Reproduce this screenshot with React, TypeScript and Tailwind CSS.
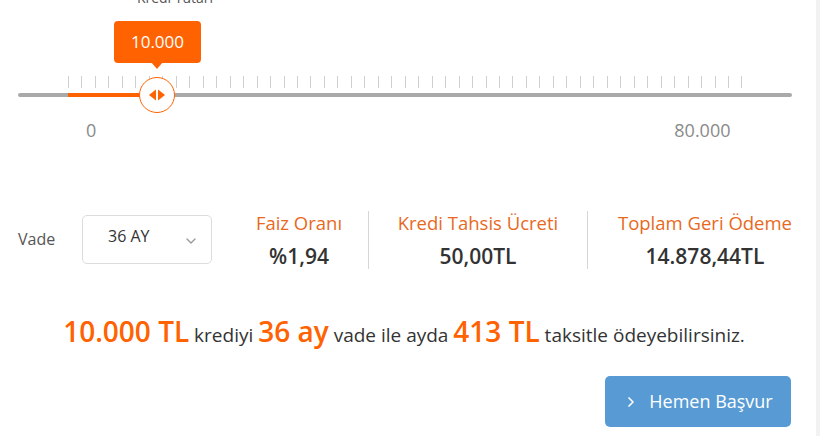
import { ChevronDown, ChevronRight } from 'lucide-react';

const font = { fontFamily: '"Open Sans", "Liberation Sans", sans-serif' };

const ticks = Array.from({ length: 51 }, (_, i) => i);

const Slider = () => (
  <div className="relative h-[190px]">
    {/* label above the value bubble, scrolled partly out of view */}
    <div className="absolute left-[100px] top-[-13px] w-[114px] text-center text-[14px] text-[#555]">
      Kredi Tutarı
    </div>

    {/* value bubble */}
    <div className="absolute left-[96px] top-[21px] flex h-[42px] w-[87px] items-center justify-center rounded-[4px] bg-[#ff6200] text-[17px] text-white">
      10.000
      <span className="absolute bottom-[-6px] left-[37px] h-0 w-0 border-x-[6px] border-t-[7px] border-x-transparent border-t-[#ff6200]" />
    </div>

    <div className="pt-[76px]">
      {/* ticks */}
      <div className="ml-[50px] flex h-[12px] w-[675px] justify-between">
        {ticks.map((t) => (
          <span key={t} className="h-full w-px bg-[#cfcfcf]" />
        ))}
      </div>

      {/* track */}
      <div className="mt-[5px] h-[4px] w-[774px] rounded-full bg-[#a9a9a9]">
        <div className="ml-[50px] h-full w-[90px] bg-[#ff6200]" />
      </div>

      {/* min / max */}
      <div className="mt-[20px] flex text-[18px] text-[#8a8a8a]">
        <span className="ml-[68px]">0</span>
        <span className="ml-[578px]">80.000</span>
      </div>
    </div>

    {/* thumb */}
    <div className="absolute left-[121px] top-[77px] flex h-[36px] w-[36px] items-center justify-center rounded-full border border-[#ff6200] bg-white">
      <svg width="18" height="12" viewBox="0 0 18 12">
        <path d="M8 0.5 L1 6 L8 11.5 Z" fill="#ff6200" />
        <path d="M10 0.5 L17 6 L10 11.5 Z" fill="#ff6200" />
      </svg>
    </div>
  </div>
);

const Stat = ({ title, value, w }: { title: string; value: string; w: string }) => (
  <div className={`${w} flex flex-none flex-col items-center`}>
    <div className="text-[18.5px] leading-[24px] text-[#e8691e]">{title}</div>
    <div className="mt-[8px] text-[21px] font-semibold leading-[26px] text-[#333]">{value}</div>
  </div>
);

export default function App() {
  return (
    <div className="flex h-[436px] w-[820px] overflow-hidden bg-white" style={font}>
      <div className="w-[816px] flex-none pl-[18px]">
        <Slider />

        {/* vade + stats */}
        <div className="mt-[20px] flex h-[58px] items-center">
          <span className="w-[64px] flex-none text-[16px] text-[#555]">Vade</span>
          <div className="flex h-[49px] w-[130px] flex-none items-center justify-between rounded-[5px] border border-[#dcdcdc] pl-[25px] pr-[12px] text-[16px] text-[#333]">
            <span className="-mt-[6px]">36 AY</span>
            <ChevronDown className="mt-[4px] h-[16px] w-[16px] text-[#999]" strokeWidth={2} />
          </div>
          <div className="ml-[18px] mt-[2px] flex h-[58px] items-stretch">
            <Stat title="Faiz Oranı" value="%1,94" w="w-[138px]" />
            <span className="w-px bg-[#d6d6d6]" />
            <Stat title="Kredi Tahsis Ücreti" value="50,00TL" w="w-[218px]" />
            <span className="w-px bg-[#d6d6d6]" />
            <Stat title="Toplam Geri Ödeme" value="14.878,44TL" w="w-[234px]" />
          </div>
        </div>

        {/* summary */}
        <div className="mt-[45px] pr-[26px] text-center text-[19px] leading-[36px] text-[#333]">
          <span className="text-[28px] font-semibold text-[#ff6200]">10.000 TL</span> krediyi{' '}
          <span className="text-[28px] font-semibold text-[#ff6200]">36 ay</span> vade ile ayda{' '}
          <span className="text-[28px] font-semibold text-[#ff6200]">413 TL</span> taksitle ödeyebilirsiniz.
        </div>

        <div className="mt-[23px] flex justify-end pr-[25px]">
          <button className="flex h-[51px] w-[186px] items-center justify-center gap-[10px] rounded-[5px] bg-[#589bd4] text-[18px] text-white">
            <ChevronRight className="h-[16px] w-[16px]" strokeWidth={2.5} />
            Hemen Başvur
          </button>
        </div>
      </div>
      <div className="w-[4px] flex-none bg-[#f2f2f2]" />
    </div>
  );
}
